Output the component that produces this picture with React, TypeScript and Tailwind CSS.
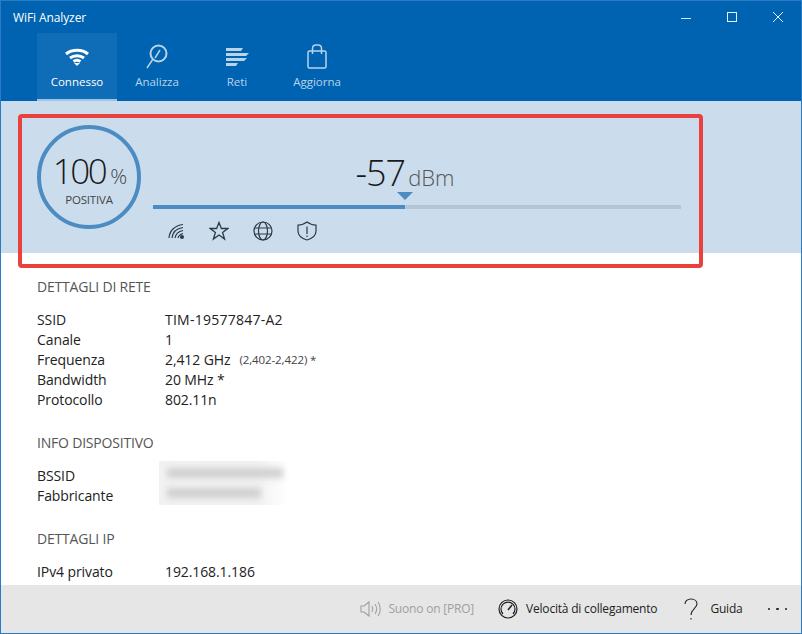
import { ReactNode } from "react";

const font = { fontFamily: '"Open Sans", "Noto Sans", sans-serif' };

const NavItem = ({ label, active, icon }: { label: string; active?: boolean; icon: ReactNode }) => (
  <div
    className={`w-[80px] h-[68px] flex flex-col items-center pt-[11px] border-b-[2px] ${
      active ? "bg-[#0f6cb6] border-[#9cc3e4] text-white" : "border-transparent text-[#b9d3ea]"
    }`}
  >
    <div className="h-[26px] flex items-center justify-center">{icon}</div>
    <div className="text-[11.5px] leading-[16px] mt-[4px]">{label}</div>
  </div>
);

const Row = ({ label, children }: { label: string; children: ReactNode }) => (
  <div className="flex h-[20px] items-center text-[14px] text-[#222] tracking-[-0.1px]">
    <div className="w-[128px]">{label}</div>
    <div className="flex items-center">{children}</div>
  </div>
);

const Heading = ({ children }: { children: ReactNode }) => (
  <div className="text-[14px] leading-[18px] text-[#555] tracking-[-0.2px]">{children}</div>
);

export default function App() {
  return (
    <div style={font} className="relative w-[802px] h-[634px] overflow-hidden flex flex-col bg-white border border-[#2a7ac4]">
      <div className="bg-[#0063b1] shrink-0">
        <div className="h-[32px] flex items-center justify-between">
          <span className="pl-[12px] pt-[1px] text-[12px] text-white tracking-[-0.1px]">WiFi Analyzer</span>
          <div className="flex items-center text-white">
            <svg width="46" height="32" viewBox="0 0 46 32"><path d="M18 17.5h10" stroke="#dcebf7" strokeWidth="1" /></svg>
            <svg width="46" height="32" viewBox="0 0 46 32"><rect x="18.5" y="11.5" width="9" height="9" fill="none" stroke="#e8f2fa" strokeWidth="1" /></svg>
            <svg width="46" height="32" viewBox="0 0 46 32"><path d="M18 11l10 10M28 11L18 21" stroke="#e8f2fa" strokeWidth="1" /></svg>
          </div>
        </div>
        <div className="h-[68px] flex pl-[36px]">
          <NavItem
            label="Connesso"
            active
            icon={
              <svg width="26" height="20" viewBox="0 0 26 20" fill="none" stroke="white" strokeWidth="3">
                <path d="M2 7c6-5 16-5 22 0" />
                <path d="M6 11c4-3 10-3 14 0" />
                <path d="M9.500 14.500c2-1.500 5-1.500 7 0" />
                <path d="M13 19l-3-3h6z" fill="white" stroke="none" />
              </svg>
            }
          />
          <NavItem
            label="Analizza"
            icon={
              <svg width="24" height="26" viewBox="0 0 24 26" fill="none" stroke="#b9d3ea" strokeWidth="2">
                <circle cx="13.500" cy="9.500" r="8" />
                <path d="M8 15L2 24M10 14l5-8" strokeWidth="1.500" />
              </svg>
            }
          />
          <NavItem
            label="Reti"
            icon={
              <svg width="24" height="20" viewBox="0 0 24 20" fill="#b9d3ea">
                <path d="M1 1h17l-2 3H1zM1 6h23l-3 3H1zM1 11h21l-3 3H1zM1 16h12l-2 3H1z" />
              </svg>
            }
          />
          <NavItem
            label="Aggiorna"
            icon={
              <svg width="22" height="26" viewBox="0 0 22 26" fill="none" stroke="#b9d3ea" strokeWidth="1.500">
                <rect x="2" y="7" width="18" height="17" rx="1.500" />
                <path d="M6.500 10V4.500C6.500 2.500 8 1 10 1h2c2 0 3.500 1.500 3.500 3.500V10" />
              </svg>
            }
          />
        </div>
      </div>

      <div className="h-[152px] shrink-0 bg-[#cbdded] flex pl-[36px] pt-[24px]">
        <div className="w-[104px] h-[104px] rounded-full border-[4px] border-[#4d8cc2] flex flex-col items-center justify-center shrink-0">
          <div className="flex items-baseline text-[#1a1a1a] mt-[4px] ml-[2px]">
            <span className="text-[35px] leading-[38px] font-light tracking-[-2.5px]">100</span>
            <span className="text-[21px] leading-[20px] font-light text-[#444] ml-[5px]">%</span>
          </div>
          <div className="text-[11.5px] leading-[15px] text-[#444] tracking-[-0.2px] mt-[2px]">POSITIVA</div>
        </div>
        <div className="w-[528px] ml-[12px] flex flex-col">
          <div className="h-[76px] flex items-baseline justify-center pt-[25px] pr-[24px]">
            <span className="text-[36px] leading-[46px] font-light text-[#1a1a1a] tracking-[-1px]">-57</span>
            <span className="text-[22px] font-light text-[#555] ml-[3px]">dBm</span>
          </div>
          <div className="relative h-[4px] mt-[4px] bg-[#b3c6d6]">
            <div className="h-full w-[252px] bg-[#4d8cc2]" />
            <svg className="absolute left-[244px] top-[-13px]" width="16" height="9" viewBox="0 0 16 9">
              <path d="M0 0h16l-8 8z" fill="#4d8cc2" />
            </svg>
          </div>
          <div className="flex items-center gap-[24px] pl-[12px] mt-[12px] text-[#2c3a46]">
            <svg width="20" height="20" viewBox="-2 0 20 20" fill="none" stroke="#2c3a46" strokeWidth="1.200">
              <path d="M2 17C2.500 10 7.500 4.500 16 3.500" />
              <path d="M5 17C5.500 12 9 7.500 16 6.500" />
              <path d="M8 17C8.500 13.500 11 10.500 16 9.500" />
              <path d="M11 17c.500-2 2-3.500 5-4.500" />
              <circle cx="15" cy="16" r="2" fill="#2c3a46" stroke="none" />
            </svg>
            <svg width="20" height="20" viewBox="0 0 20 20" fill="none" stroke="#2c3a46" strokeWidth="1.300">
              <path d="M10 1.500l2.400 6h6.400l-5.200 4 2 6.500-5.600-4-5.600 4 2-6.500-5.200-4h6.400z" />
            </svg>
            <svg width="20" height="20" viewBox="0 0 20 20" fill="none" stroke="#2c3a46" strokeWidth="1.200">
              <circle cx="10" cy="10" r="9" />
              <ellipse cx="10" cy="10" rx="4.500" ry="9" />
              <path d="M1.500 7h17M1.500 13h17" />
            </svg>
            <svg width="20" height="20" viewBox="0 0 20 20" fill="none" stroke="#2c3a46" strokeWidth="1.200">
              <path d="M10 1c2.500 2 5.500 3 9 3v6c0 4.500-4 7.500-9 9-5-1.500-9-4.500-9-9V4c3.500 0 6.500-1 9-3z" />
              <path d="M10 5.500v7.500M10 14.500v1.500" />
            </svg>
          </div>
        </div>
      </div>

      <div className="flex-1 pl-[36px] pt-[25px] min-h-0 overflow-hidden">
        <Heading>DETTAGLI DI RETE</Heading>
        <div className="mt-[13px]">
          <Row label="SSID"><span className="tracking-[0.25px]">TIM-19577847-A2</span></Row>
          <Row label="Canale">1</Row>
          <Row label="Frequenza">
            2,412 GHz
            <span className="text-[11.5px] text-[#444] ml-[9px] mt-[2px]">(2,402-2,422) *</span>
          </Row>
          <Row label="Bandwidth">20 MHz *</Row>
          <Row label="Protocollo">802.11n</Row>
        </div>
        <div className="mt-[25px]">
          <Heading>INFO DISPOSITIVO</Heading>
        </div>
        <div className="relative mt-[13px]">
          <Row label="BSSID">{""}</Row>
          <Row label="Fabbricante">{""}</Row>
          <div className="absolute left-[122px] top-[-4px] w-[130px] h-[44px] bg-linear-to-r from-[#f2f2f2] from-75% to-white">
            <div className="absolute left-[8px] top-[7px] w-[116px] h-[10px] bg-[#d0d0d0] blur-[3px]" />
            <div className="absolute left-[8px] top-[27px] w-[94px] h-[10px] bg-[#d0d0d0] blur-[3px]" />
          </div>
        </div>
        <div className="mt-[25px]">
          <Heading>DETTAGLI IP</Heading>
        </div>
        <div className="mt-[13px]">
          <Row label="IPv4 privato">192.168.1.186</Row>
        </div>
      </div>

      <div className="h-[48px] shrink-0 bg-[#e6e6e6] flex items-center justify-end text-[12px] text-[#222] tracking-[-0.2px]">
        <div className="flex items-center text-[#a0a0a0] mr-[24px]">
          <svg width="24" height="20" viewBox="0 0 24 20" fill="none" stroke="#a0a0a0" strokeWidth="1.100" className="mr-[5px]">
            <path d="M2 7h3l5-4v14l-5-4H2z" />
            <path d="M13 7c1 2 1 4 0 6M16 5c2 3 2 7 0 10M19 3c3 4 3 10 0 14" />
          </svg>
          Suono on [PRO]
        </div>
        <div className="flex items-center mr-[26px]">
          <svg width="20" height="20" viewBox="0 0 20 20" fill="none" stroke="#222" strokeWidth="1.200" className="mr-[8px]">
            <circle cx="10" cy="10" r="9" />
            <path d="M5 15a7 7 0 1 1 10 0" />
            <path d="M10 11l4-5" strokeWidth="1.500" />
          </svg>
          Velocità di collegamento
        </div>
        <div className="flex items-center mr-[25px]">
          <svg width="16" height="24" viewBox="0 0 16 24" fill="none" stroke="#222" strokeWidth="1.100" className="mr-[11px]">
            <path d="M2 7c0-3 2.500-5 6-5s6 2 6 5c0 4-6 5-6 11" />
            <path d="M8 21v1.500" />
          </svg>
          Guida
        </div>
        <div className="flex items-center gap-[6px] mr-[14px]">
          <span className="w-[2.500px] h-[2.500px] rounded-full bg-[#222]" />
          <span className="w-[2.500px] h-[2.500px] rounded-full bg-[#222]" />
          <span className="w-[2.500px] h-[2.500px] rounded-full bg-[#222]" />
        </div>
      </div>

      <div className="absolute left-[17px] top-[113px] w-[685px] h-[154px] border-[4px] border-[#e8413e] rounded-[4px] pointer-events-none" />
    </div>
  );
}
